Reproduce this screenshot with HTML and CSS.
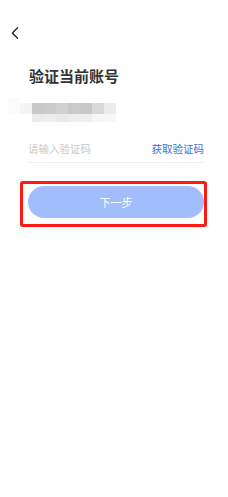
FILE: index.html
```html
<!DOCTYPE html>
<html lang="zh-CN">
<head>
<meta charset="UTF-8">
<meta name="viewport" content="width=device-width, initial-scale=1.0">
<title>验证当前账号</title>
<link rel="stylesheet" href="styles.css">
</head>
<body>

<div class="topBar">
    <svg class="backIcon" width="8" height="12" viewBox="0 0 8 12">
        <path d="M6.5 0.8 L1.4 6 L6.5 11.2" fill="none" stroke="#222" stroke-width="1.3" stroke-linecap="round" stroke-linejoin="round"/>
    </svg>
</div>

<div class="content">
    <h2 class="title">验证当前账号</h2>

    <!-- masked phone number -->
    <div class="mosaic">
        <div class="mosaicRow">
            <span style="background:#fafafa"></span>
        </div>
        <div class="mosaicRow">
            <span style="background:#fbfbfb"></span>
            <span style="background:#f4f4f4"></span>
            <span style="background:#c8c8c8"></span>
            <span style="background:#cbcbcb"></span>
            <span style="background:#d1d1d1"></span>
            <span style="background:#c9c9c9"></span>
            <span style="background:#c6c6c6"></span>
            <span style="background:#d8d8d8"></span>
            <span style="background:#ececec"></span>
        </div>
        <div class="mosaicRow short">
            <span style="background:#ffffff"></span>
            <span style="background:#ffffff"></span>
            <span style="background:#ececec"></span>
            <span style="background:#ededed"></span>
            <span style="background:#e9e9e9"></span>
            <span style="background:#ededed"></span>
            <span style="background:#eeeeee"></span>
            <span style="background:#f6f6f6"></span>
            <span style="background:#f7f7f7"></span>
        </div>
    </div>

    <div class="codeRow">
        <input type="text" class="codeInput" placeholder="请输入验证码">
        <span class="getCode">获取验证码</span>
    </div>

    <div class="btnWrap">
        <button class="nextButton">下一步</button>
    </div>
</div>

</body>
</html>
```

FILE: styles.css
```css
body {
    margin: 0;
    background: #ffffff;
    font-family: "Noto Sans CJK SC", "Noto Sans", sans-serif;
    width: 228px;
}

.topBar {
    height: 40px;
    padding-left: 11px;
    padding-top: 27px;
    box-sizing: border-box;
}

.backIcon {
    display: block;
}

.content {
    padding: 0 21px 0 20px;
}

.title {
    margin: 26px 0 0 9px;
    font-size: 15px;
    line-height: 20px;
    font-weight: 700;
    color: #333333;
}

.mosaic {
    margin-top: 11px;
    margin-left: -12px;
}

.mosaicRow {
    display: flex;
    height: 6px;
}

.mosaicRow + .mosaicRow {
    height: 11px;
}

.mosaicRow.short {
    height: 8px;
}

.mosaicRow span {
    width: 12px;
    height: 100%;
}

.codeRow {
    display: flex;
    align-items: center;
    justify-content: space-between;
    margin: 14px 3px 0 8px;
    height: 24px;
    border-bottom: 1px solid #eeeeee;
    padding-bottom: 2px;
}

.codeInput {
    border: none;
    outline: none;
    padding: 0;
    width: 100px;
    font-family: inherit;
    font-size: 10.5px;
    color: #333;
}

.codeInput::placeholder {
    color: #c8c8cc;
}

.getCode {
    font-size: 10.5px;
    color: #3c6fd6;
}

.btnWrap {
    margin-top: 18px;
    border: 3px solid #fe1a12;
    border-radius: 3px;
    padding: 2px 0 6px 5px;
}

.nextButton {
    display: block;
    width: 176px;
    height: 32px;
    border: none;
    border-radius: 16px;
    background-color: #a1bdfc;
    color: #ffffff;
    font-family: inherit;
    font-size: 11px;
}
```
